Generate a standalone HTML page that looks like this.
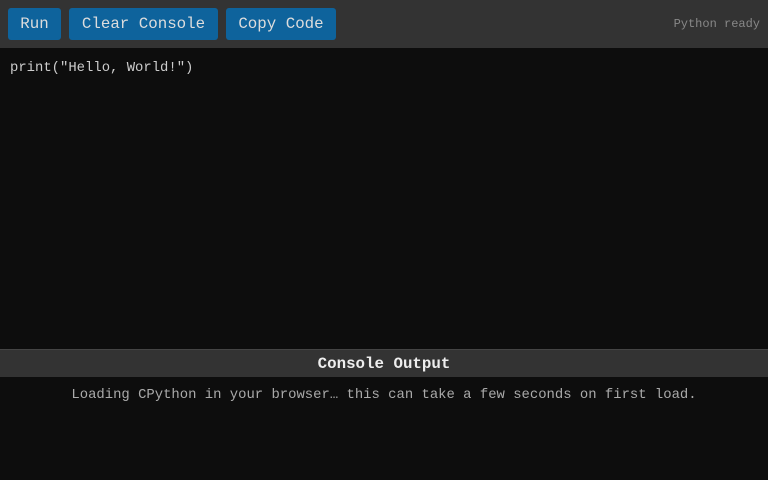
<!DOCTYPE html>
<html><head><style>
body{margin:0;width:768px;height:480px;background:#0d0d0d;font-family:"Liberation Mono",monospace;overflow:hidden;position:relative}
.bar{position:absolute;left:0;top:0;width:768px;height:48px;background:#333}
.btn{position:absolute;top:8px;height:32px;background:#0e639c;color:#ddd;border-radius:3px;font-size:15.8px;line-height:32px;text-align:center}
.st{position:absolute;right:8px;top:17px;font-size:12px;color:#888}
.code{position:absolute;left:10px;top:60px;font-size:13.9px;color:#ccc}
.hdr{position:absolute;left:0;top:349px;width:768px;height:28px;background:#333;border-top:1px solid #444;box-sizing:border-box;color:#eee;font-weight:bold;font-size:15.8px;line-height:29px;text-align:center}
.out{position:absolute;left:0;top:387px;width:768px;text-align:center;font-size:13.9px;color:#aaa}
</style></head><body>
<div class="bar"></div>
<div class="btn" style="left:8px;width:53px">Run</div>
<div class="btn" style="left:69px;width:149px">Clear Console</div>
<div class="btn" style="left:226px;width:110px">Copy Code</div>
<div class="st">Python ready</div>
<div class="code">print("Hello, World!")</div>
<div class="hdr">Console Output</div>
<div class="out">Loading CPython in your browser… this can take a few seconds on first load.</div>
</body></html>
